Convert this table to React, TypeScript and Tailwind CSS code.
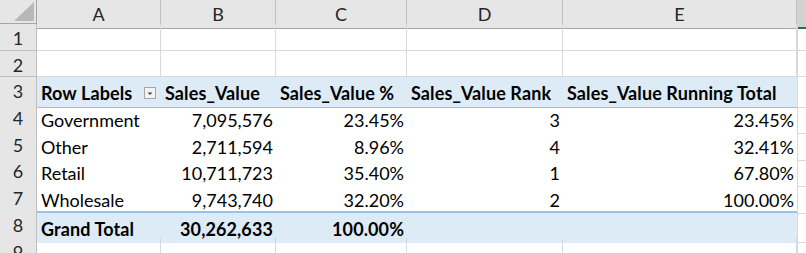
const COLS = ["A", "B", "C", "D", "E"];

type Cell = { text?: string; align?: "left" | "right"; bold?: boolean; filter?: boolean };
type Row = { n: number; h: string; kind: "plain" | "head" | "body" | "total"; cells: Cell[] };

const ROWS: Row[] = [
  { n: 1, h: "h-[27px]", kind: "plain", cells: [] },
  { n: 2, h: "h-[26px]", kind: "plain", cells: [] },
  {
    n: 3,
    h: "h-[27px]",
    kind: "head",
    cells: [
      { text: "Row Labels", bold: true, filter: true },
      { text: "Sales_Value", bold: true },
      { text: "Sales_Value %", bold: true },
      { text: "Sales_Value Rank", bold: true },
      { text: "Sales_Value Running Total", bold: true }
    ]
  },
  {
    n: 4,
    h: "h-[27px]",
    kind: "body",
    cells: [
      { text: "Government" },
      { text: "7,095,576", align: "right" },
      { text: "23.45%", align: "right" },
      { text: "3", align: "right" },
      { text: "23.45%", align: "right" }
    ]
  },
  {
    n: 5,
    h: "h-[26px]",
    kind: "body",
    cells: [
      { text: "Other" },
      { text: "2,711,594", align: "right" },
      { text: "8.96%", align: "right" },
      { text: "4", align: "right" },
      { text: "32.41%", align: "right" }
    ]
  },
  {
    n: 6,
    h: "h-[27px]",
    kind: "body",
    cells: [
      { text: "Retail" },
      { text: "10,711,723", align: "right" },
      { text: "35.40%", align: "right" },
      { text: "1", align: "right" },
      { text: "67.80%", align: "right" }
    ]
  },
  {
    n: 7,
    h: "h-[27px]",
    kind: "body",
    cells: [
      { text: "Wholesale" },
      { text: "9,743,740", align: "right" },
      { text: "32.20%", align: "right" },
      { text: "2", align: "right" },
      { text: "100.00%", align: "right" }
    ]
  },
  {
    n: 8,
    h: "h-[27px]",
    kind: "total",
    cells: [
      { text: "Grand Total", bold: true },
      { text: "30,262,633", align: "right", bold: true },
      { text: "100.00%", align: "right", bold: true },
      {},
      {}
    ]
  },
  { n: 9, h: "h-[27px]", kind: "plain", cells: [] }
];

const GRID = "grid grid-cols-[37px_124px_115px_131px_156px_234px_1fr]";

const FilterButton = () => (
  <span className="absolute right-[5px] top-[10px] flex h-[12px] w-[12px] items-center justify-center border border-[#a6a6a6] bg-[#f4f4f4]">
    <svg width="8" height="6" viewBox="0 0 8 6">
      <path d="M1.5 2.5h5L4 5z" fill="#444" />
    </svg>
  </span>
);

const CornerCell = () => (
  <div className="relative h-[24px] border-b border-r border-[#a6a6a6] bg-[#e6e6e6]">
    <svg className="absolute right-[2px] bottom-[2px]" width="20" height="19" viewBox="0 0 20 19">
      <path d="M20 0V19H0z" fill="#b8b8b8" />
    </svg>
  </div>
);

const SheetRow = ({ row }: { row: Row }) => {
  const pivot = row.kind !== "plain";
  const band =
    row.kind === "head"
      ? "bg-[#ddebf7] border-b border-[#9bc2e6]"
      : row.kind === "total"
        ? "bg-[#ddebf7] border-t-2 border-[#9bc2e6]"
        : "";

  return (
    <div className={`${GRID} ${row.h}`}>
      <div className="flex items-start justify-center overflow-hidden border-b border-r border-[#bfbfbf] bg-[#e6e6e6] pt-[2px] text-[18px] leading-[24px] text-[#262626]">
        {row.n}
      </div>
      {COLS.map((c, i) => {
        const cell = row.cells[i] ?? {};
        return (
          <div
            key={c}
            className={`relative flex items-center overflow-visible whitespace-nowrap pt-[3px] text-[18px] text-black ${
              pivot ? band : "border-b border-r border-[#d9d9d9]"
            } ${cell.align === "right" ? "justify-end pr-[3px]" : "justify-start pl-[4px]"} ${
              cell.bold ? "font-bold tracking-[0.1px]" : ""
            }`}
          >
            {cell.text}
            {cell.filter ? <FilterButton /> : null}
          </div>
        );
      })}
      <div className="border-b border-l border-[#d9d9d9]" />
    </div>
  );
};

export default function App() {
  return (
    <div className="h-[253px] w-[806px] overflow-hidden bg-white font-['Lato','Liberation_Sans',sans-serif]">
      <div className={`${GRID} h-[24px]`}>
        <CornerCell />
        {COLS.map((c) => (
          <div
            key={c}
            className="flex items-center justify-center border-b border-r border-b-[#a6a6a6] border-r-[#bfbfbf] bg-[#e6e6e6] pt-[1px] text-[18px] text-[#262626]"
          >
            {c}
          </div>
        ))}
        <div className="border-b-2 border-[#217346] bg-[#d2d2d2]" />
      </div>
      {ROWS.map((row) => (
        <SheetRow key={row.n} row={row} />
      ))}
    </div>
  );
}
